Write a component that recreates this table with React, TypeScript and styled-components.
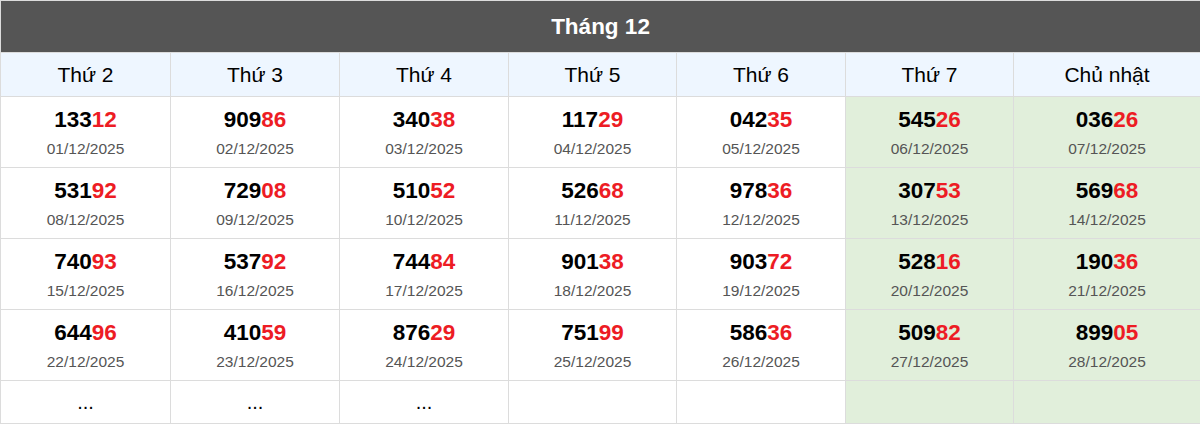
import React from "react";
import styled, { createGlobalStyle } from "styled-components";

const GlobalStyle = createGlobalStyle`
  body {
    margin: 0;
    font-family: "Liberation Sans", Arial, sans-serif;
    background: #fff;
  }
`;

const Table = styled.table`
  width: 1200px;
  border-collapse: collapse;
  table-layout: fixed;
  border: 1px solid #dcdcdc;
`;

const Col = styled.col<{ $w: number }>`
  width: ${(props) => props.$w}px;
`;

const Title = styled.th`
  height: 51px;
  background-color: #555555;
  color: #fff;
  font-size: 22.5px;
  font-weight: 700;
  text-align: center;
  padding: 0;
  line-height: 24px;
`;

const DayHead = styled.th`
  height: 43px;
  background-color: #eef6ff;
  border: 1px solid #dcdcdc;
  font-size: 21px;
  font-weight: 400;
  color: #000;
  padding: 0;
  line-height: 24px;
`;

const Cell = styled.td<{ $weekend?: boolean; $short?: boolean }>`
  height: ${(props) => (props.$short ? "43px" : "71px")};
  box-sizing: border-box;
  background-color: ${(props) => (props.$weekend ? "#e1efdb" : "#fff")};
  border: 1px solid #dcdcdc;
  text-align: center;
  vertical-align: ${(props) => (props.$short ? "middle" : "top")};
  padding: ${(props) => (props.$short ? "0" : "10px 0 0")};
  font-size: 20px;
`;

const Number = styled.div`
  font-size: 22.5px;
  font-weight: 700;
  color: #000;
  line-height: 26px;
`;

const Tail = styled.span`
  color: #ed1c24;
`;

const DateText = styled.div`
  font-size: 15.5px;
  color: #555;
  margin-top: 7px;
  line-height: 18px;
`;

const widths = [170, 169, 169, 168, 169, 168, 187];

const days = ["Thứ 2", "Thứ 3", "Thứ 4", "Thứ 5", "Thứ 6", "Thứ 7", "Chủ nhật"];

const results = [
  ["13312", "90986", "34038", "11729", "04235", "54526", "03626"],
  ["53192", "72908", "51052", "52668", "97836", "30753", "56968"],
  ["74093", "53792", "74484", "90138", "90372", "52816", "19036"],
  ["64496", "41059", "87629", "75199", "58636", "50982", "89905"],
];

const pad = (n: number) => (n < 10 ? "0" + n : String(n));

const App = () => {
  return (
    <>
      <GlobalStyle />
      <Table>
        <colgroup>
          {widths.map((w, i) => (
            <Col key={i} $w={w} />
          ))}
        </colgroup>
        <thead>
          <tr>
            <Title colSpan={7}>Tháng 12</Title>
          </tr>
          <tr>
            {days.map((d) => (
              <DayHead key={d}>{d}</DayHead>
            ))}
          </tr>
        </thead>
        <tbody>
          {results.map((row, r) => (
            <tr key={r}>
              {row.map((num, c) => (
                <Cell key={c} $weekend={c >= 5}>
                  <Number>
                    {num.slice(0, 3)}
                    <Tail>{num.slice(3)}</Tail>
                  </Number>
                  <DateText>{pad(r * 7 + c + 1)}/12/2025</DateText>
                </Cell>
              ))}
            </tr>
          ))}
          <tr>
            {days.map((d, c) => (
              <Cell key={d} $weekend={c >= 5} $short>
                {c < 3 ? "..." : ""}
              </Cell>
            ))}
          </tr>
        </tbody>
      </Table>
    </>
  );
};

export default App;
